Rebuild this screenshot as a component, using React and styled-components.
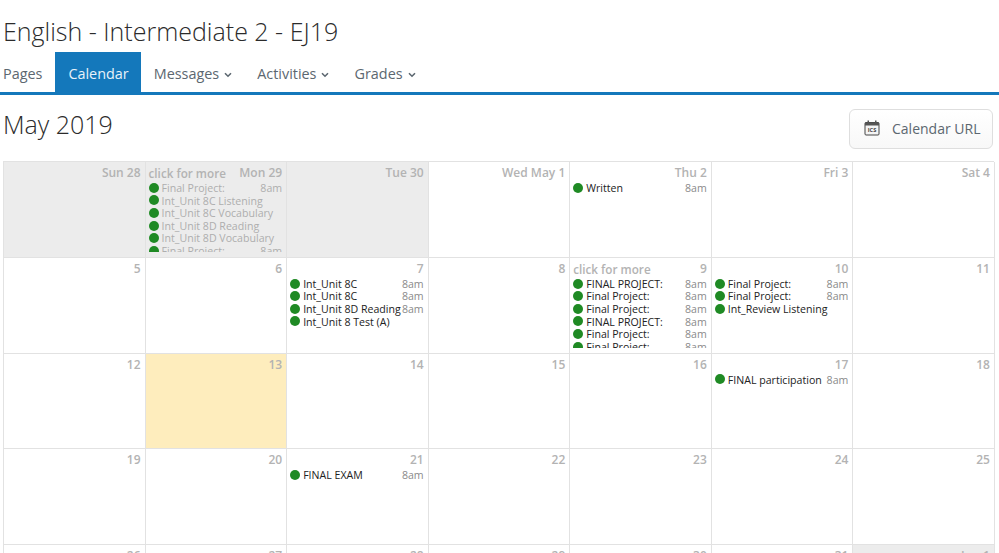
import React from "react";
import styled, { createGlobalStyle } from "styled-components";

const Global = createGlobalStyle`
  html, body { margin: 0; padding: 0; background: #fff; overflow: hidden; height: 553px; }
  body { font-family: "Open Sans", "Liberation Sans", sans-serif; color: #333; }
`;
const Page = styled.div`width: 999px; height: 553px; overflow: hidden;`;
const Title = styled.h1`
  margin: 0; padding: 14px 0 0 3px; height: 38px; font-size: 25px; line-height: 35px; font-weight: 300; color: #2b2b2b; white-space: nowrap;
`;
const Nav = styled.nav`
  display: flex; height: 40px; border-bottom: 3px solid #1478bb; align-items: stretch; box-sizing: content-box;
`;
const Tab = styled.div`
  display: flex; align-items: center; gap: 5px; padding-top: 2px; box-sizing: border-box; font-size: 14.4px; color: ${p => (p.$active ? "#e8f2f9" : "#5c6770")};
  background: ${p => (p.$active ? "#1478bb" : "transparent")};
  padding-left: ${p => p.$left}px; padding-right: ${p => p.$right}px;
`;
const Head = styled.div`
  display: flex; justify-content: space-between; padding: 14px 6px 0 3px; height: 52px; box-sizing: content-box;
`;
const Month = styled.h2`margin: 0; font-size: 25px; line-height: 30px; font-weight: 300; color: #2b2b2b;`;
const UrlButton = styled.button`
  display: flex; align-items: center; gap: 12px; width: 144px; height: 40px; padding: 0 0 2px 14px; box-sizing: border-box;
  border: 1px solid #dedede; border-radius: 6px; background: linear-gradient(#fff, #f8f8f8);
  font: 400 14px "Open Sans", sans-serif; color: #5c6770; white-space: nowrap;
`;
const Cal = styled.div`
  display: grid; grid-template-columns: repeat(7, 141.57px); grid-auto-rows: 95.8px; margin-left: 3px; width: 991px;
  border-top: 1px solid #e2e2e2; border-left: 1px solid #e2e2e2; box-sizing: border-box;
`;
const Cell = styled.div`
  position: relative; box-sizing: border-box; padding: 3px 4px 0 3px; overflow: hidden;
  border-right: 1px solid #e2e2e2; border-bottom: 1px solid #e2e2e2;
  background: ${p => (p.$today ? "#feedbd" : p.$past ? "#ececec" : "#fff")};
`;
const DayHead = styled.div`
  display: flex; justify-content: space-between; height: 16px; line-height: 16px; font-size: 12px; font-weight: 600; color: #b3b3b3;
`;
const More = styled.span`font-weight: 600; font-size: 11.7px;`;
const Num = styled.span`margin-left: auto;`;
const Events = styled.div`
  margin-top: 1px; height: ${p => (p.$clip ? 70 : 76)}px; overflow: hidden;
`;
const Event = styled.div`
  display: flex; align-items: center; height: 12.6px; font-size: 10.6px; line-height: 12.6px; color: ${p => (p.$dim ? "#aeaeae" : "#222")};
`;
const Dot = styled.span`width: 10px; height: 10px; border-radius: 50%; background: #1f8a24; flex: none; margin: -1px 3px 0 0;`;
const Name = styled.span`flex: 1; white-space: nowrap; min-width: 0;`;
const Time = styled.span`color: ${p => (p.$dim ? "#aeaeae" : "#8a8a8a")}; flex: none;`;

const Chevron = () => (
  <svg width="8" height="6" viewBox="0 0 8 6" style={{ marginTop: 3 }}>
    <path d="M1 1.2 4 4.2 7 1.2" fill="none" stroke="#5c6770" strokeWidth="1.6" />
  </svg>
);
const IcsIcon = () => (
  <svg width="16" height="16" viewBox="0 0 16 16">
    <rect x="1" y="2.5" width="14" height="12.5" rx="1" fill="#f4f4f4" stroke="#444" strokeWidth="1" />
    <rect x="1" y="2.5" width="14" height="3" fill="#555" />
    <rect x="3.5" y="0.5" width="1.5" height="3" fill="#555" />
    <rect x="11" y="0.5" width="1.5" height="3" fill="#555" />
    <text x="8" y="12.4" textAnchor="middle" fontSize="5.6" fontWeight="700" fill="#444" fontFamily="Open Sans, sans-serif">ICS</text>
  </svg>
);

const cells = [
  { l: "Sun 28", past: 1 },
  { l: "Mon 29", past: 1, more: 1, ev: [["Final Project:", "8am"], ["Int_Unit 8C Listening"], ["Int_Unit 8C Vocabulary"], ["Int_Unit 8D Reading"], ["Int_Unit 8D Vocabulary"], ["Final Project:", "8am"]] },
  { l: "Tue 30", past: 1 },
  { l: "Wed May 1" },
  { l: "Thu 2", ev: [["Written", "8am"]] },
  { l: "Fri 3" },
  { l: "Sat 4" },
  { l: "5" },
  { l: "6" },
  { l: "7", ev: [["Int_Unit 8C", "8am"], ["Int_Unit 8C", "8am"], ["Int_Unit 8D Reading", "8am"], ["Int_Unit 8 Test (A)"]] },
  { l: "8" },
  { l: "9", more: 1, ev: [["FINAL PROJECT:", "8am"], ["Final Project:", "8am"], ["Final Project:", "8am"], ["FINAL PROJECT:", "8am"], ["Final Project:", "8am"], ["Final Project:", "8am"]] },
  { l: "10", ev: [["Final Project:", "8am"], ["Final Project:", "8am"], ["Int_Review Listening"]] },
  { l: "11" },
  { l: "12" },
  { l: "13", today: 1 },
  { l: "14" },
  { l: "15" },
  { l: "16" },
  { l: "17", ev: [["FINAL participation", "8am"]] },
  { l: "18" },
  { l: "19" },
  { l: "20" },
  { l: "21", ev: [["FINAL EXAM", "8am"]] },
  { l: "22" },
  { l: "23" },
  { l: "24" },
  { l: "25" },
  { l: "26" },
  { l: "27" },
  { l: "28" },
  { l: "29" },
  { l: "30" },
  { l: "31" },
  { l: "Jun 1", past: 1 },
];

export default function App() {
  return (
    <Page>
      <Global />
      <Title>English - Intermediate 2 - EJ19</Title>
      <Nav>
        <Tab $left={3} $right={13}>Pages</Tab>
        <Tab $active $left={13} $right={12}>Calendar</Tab>
        <Tab $left={13} $right={12}>Messages<Chevron /></Tab>
        <Tab $left={13} $right={12}>Activities<Chevron /></Tab>
        <Tab $left={13} $right={12}>Grades<Chevron /></Tab>
      </Nav>
      <Head>
        <Month>May 2019</Month>
        <UrlButton><IcsIcon />Calendar URL</UrlButton>
      </Head>
      <Cal>
        {cells.map((c, i) => (
          <Cell key={i} $past={c.past} $today={c.today}>
            <DayHead>
              {c.more && <More>click for more</More>}
              <Num>{c.l}</Num>
            </DayHead>
            {c.ev && (
              <Events $clip={c.more}>
                {c.ev.map((e, j) => (
                  <Event key={j} $dim={c.past}>
                    <Dot />
                    <Name>{e[0]}</Name>
                    {e[1] && <Time $dim={c.past}>{e[1]}</Time>}
                  </Event>
                ))}
              </Events>
            )}
          </Cell>
        ))}
      </Cal>
    </Page>
  );
}
